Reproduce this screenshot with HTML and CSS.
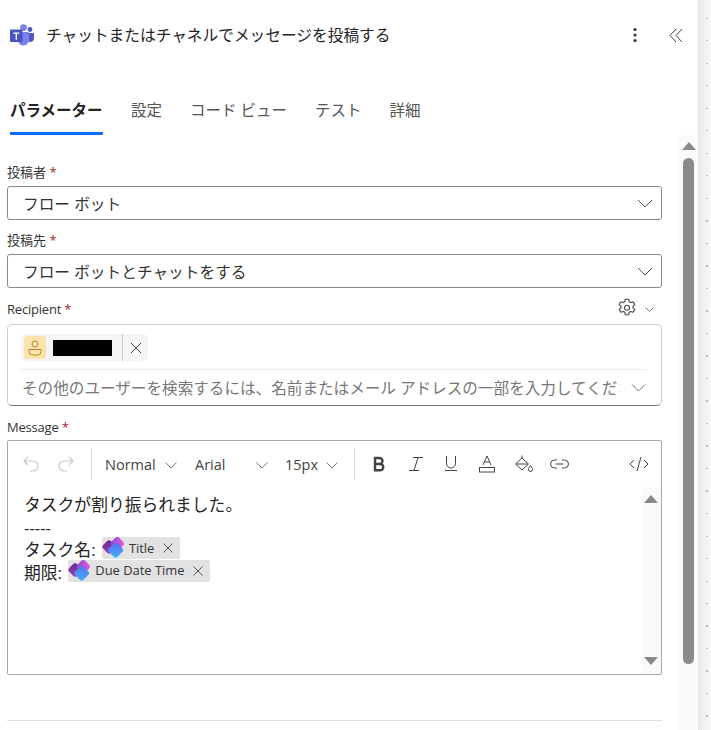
FILE: index.html
```html
<!DOCTYPE html>
<html lang="ja">
<head>
<meta charset="utf-8">
<title>チャットまたはチャネルでメッセージを投稿する</title>
<link rel="stylesheet" href="styles.css">
</head>
<body>
<div class="page">
  <main class="panel">
    <header class="head">
      <svg class="teams" viewBox="0 0 24 22" width="24" height="22">
        <circle cx="13.5" cy="3.6" r="3.4" fill="#7b83eb"/>
        <circle cx="20" cy="5.500" r="2.400" fill="#5059c9"/>
        <path d="M17 9h6a1 1 0 0 1 1 1v4.500a3.700 3.700 0 0 1-7 1.500z" fill="#5059c9"/>
        <path d="M7 8h11a1 1 0 0 1 1 1v7a5.600 5.600 0 0 1-11.200 0z" fill="#7b83eb"/>
        <rect x="0" y="5.500" width="12.500" height="12.500" rx="1.200" fill="#4b53bc"/>
        <path d="M3.300 8.500h6v1.300H7v6H5.600v-6H3.300z" fill="#fff"/>
      </svg>
      <h1 class="title">チャットまたはチャネルでメッセージを投稿する</h1>
      <svg class="more" viewBox="0 0 4 16" width="4" height="16"><circle cx="2" cy="2.500" r="1.600"/><circle cx="2" cy="8" r="1.600"/><circle cx="2" cy="13.500" r="1.600"/></svg>
      <svg class="collapse" viewBox="0 0 14 15" width="14" height="15"><path d="M7 1 1 7.500 7 14M13 1 7 7.500 13 14" fill="none" stroke="#444" stroke-width="1"/></svg>
    </header>
    <nav class="tabs">
      <span class="tab active">パラメーター</span>
      <span class="tab">設定</span>
      <span class="tab">コード ビュー</span>
      <span class="tab">テスト</span>
      <span class="tab">詳細</span>
    </nav>
    <div class="body">
      <form class="form">
        <div class="field">
          <label class="label">投稿者 <i>*</i></label>
          <div class="select"><span>フロー ボット</span><svg class="chev" viewBox="0 0 16 9" width="16" height="9"><path d="M1 1l7 7 7-7"/></svg></div>
        </div>
        <div class="field">
          <label class="label">投稿先 <i>*</i></label>
          <div class="select"><span>フロー ボットとチャットをする</span><svg class="chev" viewBox="0 0 16 9" width="16" height="9"><path d="M1 1l7 7 7-7"/></svg></div>
        </div>
        <div class="field">
          <div class="label-row">
            <label class="label latin">Recipient <i>*</i></label>
            <svg class="gear" viewBox="0 0 20 20" width="20" height="20"><path d="M8.300 1.300h3.400l.5 2.500 1.500.8 2.400-.9 1.700 2.900-1.900 1.700v1.400l1.900 1.700-1.700 2.900-2.400-.9-1.500.8-.5 2.500H8.300l-.5-2.500-1.500-.8-2.400.9-1.700-2.900 1.900-1.700V8.300L2.200 6.600l1.700-2.900 2.400.9 1.500-.8z" fill="none" stroke="#444" stroke-width="1.100" stroke-linejoin="round"/><circle cx="10" cy="9.700" r="2.500" fill="none" stroke="#444" stroke-width="1.100"/></svg>
            <svg class="mini-chev" viewBox="0 0 9 5" width="9" height="5"><path d="M.5.500l4 4 4-4"/></svg>
          </div>
          <div class="people">
            <div class="person">
              <span class="avatar"><svg viewBox="0 0 16 18" width="16" height="18"><circle cx="8" cy="5" r="3" fill="none" stroke="#b58a24" stroke-width="1"/><path d="M2 10.500h12v2a3.500 3.500 0 0 1-3.500 3.500h-5A3.500 3.500 0 0 1 2 12.500z" fill="none" stroke="#b58a24" stroke-width="1"/></svg></span>
              <span class="redact"></span>
              <span class="person-x"><svg class="x" viewBox="0 0 12 12" width="12" height="12"><path d="M1 1l10 10M11 1 1 11"/></svg></span>
            </div>
            <div class="search">
              <span class="placeholder">その他のユーザーを検索するには、名前またはメール アドレスの一部を入力してください</span>
              <svg class="chev grey" viewBox="0 0 15 8" width="15" height="8"><path d="M1 .5l6.500 6.500L14 .5"/></svg>
            </div>
          </div>
        </div>
        <div class="field">
          <label class="label latin low">Message <i>*</i></label>
          <div class="editor">
            <div class="toolbar">
              <svg class="tool off t-undo" viewBox="0 0 18 18" width="18" height="18"><path d="M6 2 2 6l4 4M2 6h9a5 5 0 0 1 0 10H8"/></svg>
              <svg class="tool off t-redo" viewBox="0 0 18 18" width="18" height="18"><path d="M12 2l4 4-4 4M16 6H7a5 5 0 0 0 0 10h3"/></svg>
              <span class="sep s1"></span>
              <span class="drop d-normal">Normal<svg class="mini-chev wide" viewBox="0 0 12 7" width="12" height="7"><path d="M.5.500l5.500 5.500L11.500.5"/></svg></span>
              <span class="drop d-arial">Arial<svg class="mini-chev wide" viewBox="0 0 12 7" width="12" height="7"><path d="M.5.500l5.500 5.500L11.500.5"/></svg></span>
              <span class="drop d-size">15px<svg class="mini-chev wide" viewBox="0 0 12 7" width="12" height="7"><path d="M.5.500l5.500 5.500L11.500.5"/></svg></span>
              <span class="sep s2"></span>
              <svg class="tool t-b" viewBox="0 0 14 16" width="14" height="16"><path d="M3 2h4.500a3 3 0 0 1 0 6H3zM3 8h5.200a3.100 3.100 0 0 1 0 6.200H3z" stroke-width="2.400" stroke="#444"/></svg>
              <svg class="tool t-i" viewBox="0 0 16 16" width="16" height="16"><path d="M5 1.500h10M1 14.500h10M10 1.500l-4 13"/></svg>
              <svg class="tool t-u" viewBox="0 0 14 18" width="14" height="18"><path d="M2.500 1v7.500a4.500 4.500 0 0 0 9 0V1M1 15.500h12"/></svg>
              <svg class="tool t-a" viewBox="0 0 16 18" width="16" height="18"><path d="M4 10 8 1l4 9M5.300 7h5.400"/><rect x=".5" y="12.500" width="15" height="4.500"/></svg>
              <svg class="tool t-fill" viewBox="0 0 20 18" width="20" height="18"><path d="M8 .5v3M8 3 1.500 9 8 15l6.500-6zM2 9h12M16.500 10.500c-1.300 1.800-2 2.800-2 4a2 2 0 0 0 4 0c0-1.200-.7-2.200-2-4z"/></svg>
              <svg class="tool t-link" viewBox="0 0 19 10" width="19" height="10"><path d="M7 1H4.500a4 4 0 0 0 0 8H7M12 1h2.500a4 4 0 0 1 0 8H12M5.500 5h8"/></svg>
              <svg class="tool t-code" viewBox="0 0 20 16" width="20" height="16"><path d="M5 4 1 8l4 4M15 4l4 4-4 4M12 1 8 15"/></svg>
            </div>
            <div class="content">
              <div class="text">
                <p>タスクが割り振られました。</p>
                <p>-----</p>
                <p>タスク名: <span class="token">
                  <svg class="heart" viewBox="1 0 22 20" width="24" height="22"><defs><linearGradient id="hp" x1="0" y1="0" x2="1" y2="1"><stop offset="0" stop-color="#5c2a8c"/><stop offset="1" stop-color="#a53bb8"/></linearGradient><linearGradient id="hm" x1="1" y1="0" x2="0" y2="1"><stop offset="0" stop-color="#e45fd6"/><stop offset="1" stop-color="#8a45d8"/></linearGradient><linearGradient id="hb" x1="0" y1="0" x2="1" y2="1"><stop offset="0" stop-color="#5a6cf0"/><stop offset="1" stop-color="#3fb4f5"/></linearGradient></defs><rect x="2.500" y="4" width="10" height="10" rx="2.500" transform="rotate(45 7.500 9)" fill="url(#hp)"/><rect x="10" y="1" width="10" height="10" rx="2.500" transform="rotate(45 15 6)" fill="url(#hm)"/><rect x="8" y="6.500" width="11" height="11" rx="2.500" transform="rotate(45 13.500 12)" fill="url(#hb)"/></svg>Title<svg class="x small" viewBox="0 0 10 10" width="10" height="10"><path d="M.5.500l9 9M9.500.5l-9 9"/></svg></span></p>
                <p>期限: <span class="token">
                  <svg class="heart" viewBox="1 0 22 20" width="24" height="22"><rect x="2.500" y="4" width="10" height="10" rx="2.500" transform="rotate(45 7.500 9)" fill="url(#hp)"/><rect x="10" y="1" width="10" height="10" rx="2.500" transform="rotate(45 15 6)" fill="url(#hm)"/><rect x="8" y="6.500" width="11" height="11" rx="2.500" transform="rotate(45 13.500 12)" fill="url(#hb)"/></svg>Due Date Time<svg class="x small" viewBox="0 0 10 10" width="10" height="10"><path d="M.5.500l9 9M9.500.5l-9 9"/></svg></span></p>
              </div>
              <div class="inner-scroll"><span class="arrow up"></span><span class="arrow down"></span></div>
            </div>
          </div>
        </div>
        <hr class="rule">
      </form>
      <div class="scroll"><span class="arrow up"></span><span class="thumb"></span></div>
    </div>
  </main>
  <aside class="strip"></aside>
</div>
</body>
</html>
```

FILE: styles.css
```css
* { box-sizing: border-box; }
html, body { margin: 0; height: 100%; overflow: hidden; background: #fff; }
body {
  font-family: "Open Sans", "Noto Sans CJK JP", sans-serif;
  color: #242424;
  font-size: 14px;
}
.page { display: flex; width: 711px; height: 730px; }
.panel { width: 699px; display: flex; flex-direction: column; border-right: 1px solid #e3e3e3; }
.strip {
  width: 12px;
  background:
    repeating-linear-gradient(180deg, transparent 0 18px, #b8b8b8 18px 19px, transparent 19px 22.500px) 7px 0 / 2px 100% no-repeat,
    linear-gradient(90deg, #ebebeb, #f7f7f7);
}

.head { height: 70px; display: flex; align-items: center; padding: 0 0 0 10px; flex: none; }
.teams { flex: none; margin-top: -1px; }
.title { margin: 0 0 0 12px; font-size: 15.7px; font-weight: 400; line-height: 22px; width: 590px; white-space: nowrap; }
.more { fill: #333; flex: none; margin-left: -3px; }
.collapse { flex: none; margin-left: 32px; }

.tabs { display: flex; height: 65px; padding: 26px 0 0 10px; gap: 28px; font-size: 15.500px; color: #555; flex: none; }
.tab { height: 39px; line-height: 28px; white-space: nowrap; }
.tab.active { font-weight: 700; color: #242424; border-bottom: 3px solid #0f6cff; border-radius: 1px; width: 93px; }

.body { flex: 1; display: flex; min-height: 0; }
.form { width: 679px; padding: 28px 17px 0 7px; display: flex; flex-direction: column; }
.field { display: flex; flex-direction: column; margin-bottom: 11px; }
.label { font-size: 13px; line-height: 18px; height: 18px; margin-bottom: 5px; color: #333; display: block; white-space: nowrap; }
.label i { font-style: normal; color: #a4262c; }
.label.latin { letter-spacing: -.2px; }
.label.low { padding-top: 1px; }
.label-row { display: flex; align-items: flex-start; height: 25px; }
.label-row .label { flex: 1; margin: 1px 0 0; }
.gear { margin: -1px 0 0; }
.mini-chev { fill: none; stroke: #777; stroke-width: 1; }
.label-row .mini-chev { margin: 8px 8px 0 8px; }

.select {
  height: 34px;
  border: 1px solid #8a8a8a;
  border-radius: 3px;
  display: flex;
  align-items: center;
  justify-content: space-between;
  padding: 0 8px 0 15px;
  font-size: 15.700px;
  color: #333;
}
.chev { fill: none; stroke: #555; stroke-width: 1; flex: none; }
.chev.grey { stroke: #777; }

.people {
  height: 82px;
  border: 1px solid #cfcfcf;
  border-bottom-color: #777;
  border-radius: 5px;
  padding: 9px 14px 0 13px;
}
.person { display: flex; align-items: center; width: 127px; height: 27px; background: #f5f5f5; border-radius: 5px; padding-left: 3px; }
.avatar { width: 22px; height: 23px; border-radius: 3px; background: #fbe3ad; display: flex; align-items: center; justify-content: center; flex: none; }
.redact { width: 59px; height: 16px; background: #000; margin-left: 7px; flex: none; }
.person-x { height: 27px; margin-left: 10px; border-left: 1px solid #c8c8c8; flex: 1; display: flex; align-items: center; justify-content: center; }
.x { fill: none; stroke: #444; stroke-width: 1; }
.search { margin-top: 8px; border-top: 1px solid #ebebeb; height: 36px; display: flex; align-items: center; justify-content: space-between; padding: 0 1px 0 1px; }
.placeholder { font-size: 15.600px; color: #777; white-space: nowrap; overflow: hidden; width: 598px; flex: none; }

.editor { height: 235px; border: 1px solid #a8a8a8; border-radius: 2px; display: flex; flex-direction: column; }
.toolbar { height: 46px; position: relative; flex: none; font-size: 14.500px; color: #444; }
.tool { position: absolute; fill: none; stroke: #444; stroke-width: 1; }
.tool.off { stroke: #c8c8c8; stroke-width: 1.200; }
.t-undo { left: 14px; top: 14px; }
.t-redo { left: 49px; top: 14px; }
.t-b { left: 364px; top: 15px; fill: none; }
.t-i { left: 400px; top: 15px; }
.t-u { left: 436px; top: 14px; }
.t-a { left: 471px; top: 14px; }
.t-fill { left: 506px; top: 14px; }
.t-link { left: 542px; top: 18px; }
.t-code { left: 621px; top: 15px; }
.sep { position: absolute; top: 7px; width: 1px; height: 32px; background: #dcdcdc; }
.s1 { left: 83px; }
.s2 { left: 346px; }
.drop { position: absolute; top: 13px; line-height: 22px; white-space: nowrap; }
.drop .wide { position: absolute; top: 8px; }
.d-normal { left: 97px; }
.d-normal .wide { left: 60px; }
.d-arial { left: 187px; }
.d-arial .wide { left: 61px; }
.d-size { left: 277px; }
.d-size .wide { left: 41px; }

.content { flex: 1; display: flex; min-height: 0; }
.text { flex: 1; padding: 6px 0 0 16px; font-size: 16.800px; line-height: 23px; color: #242424; }
.text p { margin: 0; height: 22.500px; white-space: nowrap; }
.token { display: inline-flex; align-items: center; height: 22px; background: #e2e2e2; border-radius: 2px; font-size: 12.900px; padding: 0 7px 0 0; vertical-align: top; margin: -1px 0 0 2px; color: #333; }
.heart { margin: 0 3px 0 0; flex: none; }
.x.small { margin-left: 9px; stroke: #555; }
.inner-scroll { width: 20px; background: #fafafa; position: relative; border-bottom-right-radius: 2px; }
.arrow { position: absolute; width: 0; height: 0; border-left: 7px solid transparent; border-right: 7px solid transparent; }
.arrow.up { border-bottom: 8px solid #8a8a8a; top: 8px; left: 3px; }
.arrow.down { border-top: 8px solid #8a8a8a; bottom: 9px; left: 3px; }

.rule { margin: 34px 0 0; border: 0; border-top: 1px solid #e0e0e0; width: 655px; flex: none; }
.scroll { width: 18px; background: #fafafa; position: relative; }
.scroll .thumb { position: absolute; left: 4px; top: 23px; width: 11px; height: 506px; border-radius: 6px; background: #8a8a8a; }
.scroll .arrow.up { top: 7px; left: 3px; }
```
